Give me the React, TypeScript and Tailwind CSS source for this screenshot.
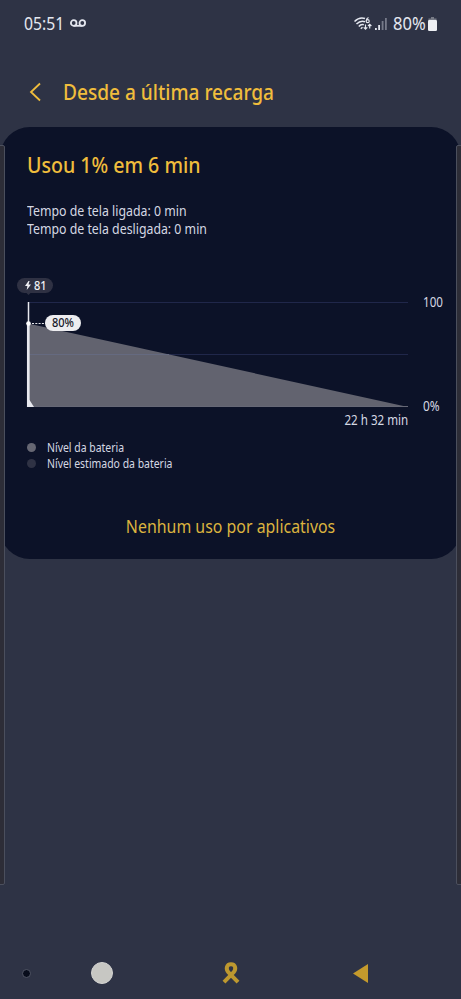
const LEGEND = [
  { label: 'Nível da bateria', dot: 'bg-[#666773]' },
  { label: 'Nível estimado da bateria', dot: 'bg-[#2f3244]' },
]

function StatusBar() {
  return (
    <div className="flex h-[47px] items-center justify-between pl-6 pr-[24px] text-[#e4e7ef]">
      <div className="flex items-center">
        <span className="w-[41px] origin-left scale-x-[0.9] whitespace-nowrap text-[17.5px]">05:51</span>
        <svg className="ml-[5px] h-[9px] w-4" viewBox="0 0 16 9" fill="none" stroke="currentColor" strokeWidth="1.8">
          <circle cx="3.7" cy="4" r="2.8" />
          <circle cx="12.3" cy="4" r="2.8" />
          <path d="M3.7 6.8h8.6" />
        </svg>
      </div>
      <div className="flex items-center">
        <svg className="h-4 w-[18px]" viewBox="0 0 18 16" fill="none" stroke="currentColor" strokeWidth="1.5">
          <path d="M.5 5.500Q5.500 .5 11 2.500" />
          <path d="M2.500 8Q6.500 4 11 5.700" />
          <path d="M4.800 10.500Q7 7.800 9.800 8.800" />
          <path d="M6.800 12.800l1.700-1.500" />
          <path d="M14.500 1.500Q12.300 2.400 12.300 5" strokeWidth="1.2" />
          <circle cx="13.700" cy="5.200" r="1.500" strokeWidth="1.200" />
          <path d="M11.500 8.500V13M9.700 11.300l1.800 1.800 1.800-1.800M15.700 12.500V8.300M14 10l1.700-1.700L17.400 10" strokeWidth="1.200" />
        </svg>
        <svg className="ml-[3px] h-[14px] w-3" viewBox="0 0 12 14" fill="currentColor">
          <path d="M0 11h1.800v2H0zM3.200 8H5v5H3.200z" />
          <path d="M6.700 4h1.800v9H6.700zM10 1h1.800v12H10z" opacity=".4" />
        </svg>
        <span className="ml-[6px] w-[34px] origin-left scale-x-[0.92] whitespace-nowrap text-[18px]">80%</span>
        <svg className="ml-px h-[14px] w-[9px]" viewBox="0 0 9 14">
          <path d="M3 0h3v1.500h2.500V4h-8V1.500H3z" fill="#777b86" />
          <rect y="3" width="9" height="11" rx="1.200" fill="#eef0f4" />
        </svg>
      </div>
    </div>
  )
}

function BatteryChart() {
  return (
    <div className="relative mt-[39px] h-[154px]">
      <svg className="block h-[154px] w-full" viewBox="0 0 461 154">
        <path d="M28 25.500h380M28 77.500h380" stroke="#20274a" />
        <path d="M28 46.500L408 130H28z" fill="#62636f" />
        <path d="M28 77.500h141" stroke="#656a80" />
        <path d="M28 129.500h380" stroke="#666876" />
        <path d="M28.500 25v22" stroke="#e8e9ef" strokeWidth="1.500" />
        <path d="M28.300 46v84" stroke="#e8e9ef" strokeWidth="2.700" />
        <path d="M27 123h2.500l4.500 7h-7z" fill="#e8e9ef" />
        <circle cx="28.500" cy="46.500" r="2.300" fill="#fff" />
        <path d="M32 46.500h14" stroke="#e8e9ef" strokeWidth="1.200" strokeDasharray="2 1.300" />
        <path d="M26 15.500h5l-2.500 2.500z" fill="#2f3143" />
      </svg>
      <div className="absolute left-[17px] top-[1px] flex h-[15px] w-[36px] items-center rounded-full bg-[#2f3143] pl-[8px] text-[#f1f1f5]">
        <svg className="h-[9px] w-[6px]" viewBox="0 0 6 9" fill="currentColor">
          <path d="M3.500 0L0 5h2.400L1.700 9 6 3.600H3.500L4.600 0z" />
        </svg>
        <span className="ml-[3px] origin-left scale-x-[0.92] text-[12px] font-medium">81</span>
      </div>
      <div className="absolute left-[45px] top-[38px] flex h-4 w-[36px] items-center justify-center rounded-full bg-[#ededf0] text-[#17192a]">
        <span className="scale-x-[0.92] text-[12px] font-medium">80%</span>
      </div>
      <span className="absolute left-[423px] top-[16px] origin-left scale-x-[0.86] text-[13.5px] leading-[18px]">100</span>
      <span className="absolute left-[423px] top-[120px] origin-left scale-x-[0.88] text-[13.5px] leading-[18px]">0%</span>
      <span className="absolute right-[53px] top-[134px] origin-right scale-x-[0.86] whitespace-nowrap text-[13.5px] leading-[18px]">
        22 h 32 min
      </span>
    </div>
  )
}

function UsageCard() {
  return (
    <section className="h-[432px] overflow-hidden rounded-[30px] bg-[#0c1228] pt-[23px] text-[#d5d8e3]">
      <h2 className="ml-[27px] w-max origin-left scale-x-[0.87] text-[22.5px] font-medium leading-[30px] text-[#f0bd3c]">
        Usou 1% em 6 min
      </h2>
      <div className="ml-[27px] mt-[22px] text-[14px] leading-[18px]">
        <p className="w-max origin-left scale-x-[0.88]">Tempo de tela ligada: 0 min</p>
        <p className="w-max origin-left scale-x-[0.88]">Tempo de tela desligada: 0 min</p>
      </div>
      <BatteryChart />
      <ul className="ml-[27px] mt-[9px] text-[12px] leading-[15.500px]">
        {LEGEND.map((item) => (
          <li key={item.label} className="flex items-center">
            <span className={`size-[9px] shrink-0 rounded-full ${item.dot}`} />
            <span className="ml-[11px] w-max origin-left scale-x-[0.87]">{item.label}</span>
          </li>
        ))}
      </ul>
      <p className="mt-[43px] flex justify-center text-[18px] leading-6 text-[#dcb43f]">
        <span className="scale-x-[0.883]">Nenhum uso por aplicativos</span>
      </p>
    </section>
  )
}

function NavigationBar() {
  return (
    <nav className="mt-auto flex h-[52px] items-center">
      <span className="ml-[22px] size-[9px] rounded-full border border-[#515665] bg-[#080d1c]" />
      <span className="ml-[60px] size-[22px] rounded-full border border-[#d3d3d1] bg-[#c7c7c3]" />
      <svg className="ml-[109px] h-[22px] w-[18px]" viewBox="0 0 18 22" fill="none" stroke="#bd982f" strokeWidth="4">
        <path d="M2 20.200L11.500 10.500C14.500 7 13.500 2.300 9 2.300S3.500 7 6.500 10.500L16 20.200" />
      </svg>
      <svg className="ml-[113px] h-[19px] w-[15px]" viewBox="0 0 15 19">
        <path d="M0 9.500L15 0v19z" fill="#c49a2c" />
      </svg>
    </nav>
  )
}

export default function App() {
  return (
    <main className="relative flex h-[999px] w-[461px] flex-col overflow-hidden bg-[#2e3345] font-['Noto_Sans',sans-serif]">
      <StatusBar />
      <header className="flex h-[80px] items-center pl-[29px] pt-[10px] text-[#f0bd3c]">
        <svg className="h-5 w-3" viewBox="0 0 12 20" fill="none" stroke="currentColor" strokeWidth="1.8">
          <path d="M11 1.500L2 10l9 8.500" />
        </svg>
        <h1 className="-mt-px ml-[22px] w-max origin-left scale-x-[0.868] text-[22px] font-medium">Desde a última recarga</h1>
      </header>
      <UsageCard />
      <NavigationBar />
      <div className="absolute -left-px top-[145px] h-[740px] w-[6px] rounded-r-[2px] border border-[#4b4f5d] bg-[#2d2d37]" />
      <div className="absolute -right-px top-[145px] h-[740px] w-[6px] rounded-l-[2px] border border-[#4b4f5d] bg-[#2d2d37]" />
    </main>
  )
}
